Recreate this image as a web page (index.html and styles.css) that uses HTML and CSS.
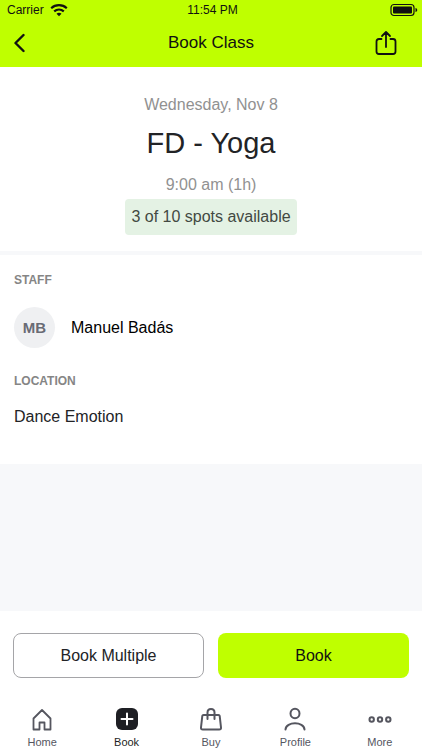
FILE: index.html
```html
<!DOCTYPE html>
<html lang="en">
<head>
<meta charset="utf-8">
<meta name="viewport" content="width=device-width, initial-scale=1">
<title>Book Class</title>
<link rel="stylesheet" href="styles.css">
</head>
<body>
<div class="app">
  <header class="top">
    <div class="status">
      <div class="carrier">
        <span>Carrier</span>
        <svg class="wifi" viewBox="0 0 18 14" aria-hidden="true">
          <path d="M1.200 5.200C5.600 1.200 12.400 1.200 16.800 5.200M4.200 8.300C7 5.900 11 5.900 13.800 8.300" fill="none" stroke="currentColor" stroke-width="2.200"/>
          <path d="M9 13.200 6.500 10.700C7.900 9.400 10.100 9.400 11.500 10.700Z" fill="currentColor"/>
        </svg>
      </div>
      <span>11:54 PM</span>
      <svg class="battery" viewBox="0 0 28 14" aria-hidden="true">
        <rect x="1" y="1.500" width="23" height="11" rx="3" fill="none" stroke="currentColor" stroke-width="1.200"/>
        <rect x="3" y="3.500" width="19" height="7" rx="1" fill="currentColor"/>
        <path d="M25.500 5C27.800 5.600 27.800 8.400 25.500 9Z" fill="currentColor"/>
      </svg>
    </div>
    <div class="bar">
      <button class="icon-button" type="button" aria-label="Back">
        <svg class="back" viewBox="0 0 12 20" aria-hidden="true"><path d="M9.500 2 1.500 10l8 8" fill="none" stroke="currentColor" stroke-width="2.400" stroke-linecap="round" stroke-linejoin="round"/></svg>
      </button>
      <h1 class="title">Book Class</h1>
      <button class="icon-button share-button" type="button" aria-label="Share">
        <svg class="share" viewBox="0 0 22 26" aria-hidden="true"><path d="M6.500 9H4Q1.500 9 1.500 11.500V21.500Q1.500 24 4 24H18Q20.500 24 20.500 21.500V11.500Q20.500 9 18 9H15.500M11 17V2.500M7 6 11 2l4 4" fill="none" stroke="currentColor" stroke-width="1.800" stroke-linecap="round" stroke-linejoin="round"/></svg>
      </button>
    </div>
  </header>
  <main class="content">
    <section class="summary">
      <p class="muted">Wednesday, Nov 8</p>
      <h2 class="class-name">FD - Yoga</h2>
      <p class="muted">9:00 am (1h)</p>
      <p class="spots">3 of 10 spots available</p>
    </section>
    <section class="details">
      <h3 class="label">Staff</h3>
      <div class="person">
        <span class="avatar">MB</span>
        <span>Manuel Badás</span>
      </div>
      <h3 class="label">Location</h3>
      <p class="place">Dance Emotion</p>
    </section>
  </main>
  <div class="actions">
    <button class="button outline" type="button">Book Multiple</button>
    <button class="button primary" type="button">Book</button>
  </div>
  <nav class="tabs">
    <a class="tab" href="#home">
      <svg viewBox="0 0 24 24" aria-hidden="true"><path d="M3.500 22.500V11.500L12 3l8.500 8.500V22.500H14.500V15.500H9.500V22.500Z" fill="none" stroke="currentColor" stroke-width="1.800" stroke-linejoin="round"/></svg>
      <span>Home</span>
    </a>
    <a class="tab active" href="#book" aria-current="page">
      <svg viewBox="0 0 24 24" aria-hidden="true"><rect x="1" y="1" width="22" height="22" rx="6" fill="currentColor"/><path d="M12 6.500V17.500M6.500 12H17.500" stroke="#fff" stroke-width="2" stroke-linecap="round"/></svg>
      <span>Book</span>
    </a>
    <a class="tab" href="#buy">
      <svg viewBox="0 0 24 24" aria-hidden="true"><path d="M4.500 8H19.500Q20.500 8 20.700 9L22 20.500Q22.200 22.500 20.200 22.500H3.800Q1.800 22.500 2 20.500L3.300 9Q3.500 8 4.500 8ZM8.500 12V5.500C8.500 .800 15.500 .800 15.500 5.500V12" fill="none" stroke="currentColor" stroke-width="2" stroke-linecap="round" stroke-linejoin="round"/></svg>
      <span>Buy</span>
    </a>
    <a class="tab" href="#profile">
      <svg viewBox="0 0 24 24" aria-hidden="true"><ellipse cx="12" cy="6.500" rx="4.500" ry="4.800" fill="none" stroke="currentColor" stroke-width="2"/><path d="M2.500 22.500C3 14.200 21 14.200 21.500 22.500" fill="none" stroke="currentColor" stroke-width="2" stroke-linecap="round"/></svg>
      <span>Profile</span>
    </a>
    <a class="tab" href="#more">
      <svg viewBox="0 0 24 24" aria-hidden="true"><g fill="none" stroke="currentColor" stroke-width="2"><circle cx="3.700" cy="12.500" r="2.200"/><circle cx="12" cy="12.500" r="2.200"/><circle cx="20.300" cy="12.500" r="2.200"/></g></svg>
      <span>More</span>
    </a>
  </nav>
</div>
</body>
</html>
```
FILE: styles.css
```css
* {
  box-sizing: border-box;
}

body,
h1,
h2,
h3,
p {
  margin: 0;
  font-weight: 400;
}

body {
  background: #fff;
  color: #222326;
  font: 16px/20px "Liberation Sans", Arial, sans-serif;
}

button {
  padding: 0;
  border: 0;
  background: none;
  color: inherit;
  font: inherit;
}

svg {
  display: block;
}

.app {
  display: flex;
  flex-direction: column;
  min-height: 100vh;
}

.top {
  background: #bfff00;
  color: #111;
  padding-bottom: 1px;
}

.status {
  display: grid;
  grid-template-columns: 1fr auto 1fr;
  align-items: center;
  padding: 0 4px 0 7px;
  font-size: 12px;
}

.carrier {
  display: flex;
  align-items: center;
  gap: 6px;
}

.wifi {
  width: 18px;
  height: 14px;
}

.battery {
  width: 28px;
  height: 14px;
  justify-self: end;
}

.bar {
  display: grid;
  grid-template-columns: 44px 1fr 44px;
  align-items: center;
  height: 46px;
  padding: 0 14px;
}

.icon-button {
  display: flex;
  align-items: center;
  height: 40px;
}

.share-button {
  justify-content: flex-end;
  padding-right: 11px;
}

.back {
  width: 12px;
  height: 20px;
}

.share {
  width: 22px;
  height: 26px;
}

.title {
  font-size: 17px;
  text-align: center;
}

.content {
  flex: 1;
  background: #f7f8fa;
}

.summary {
  display: flex;
  flex-direction: column;
  align-items: center;
  padding: 28px 14px 16px;
  margin-bottom: 4px;
  background: #fff;
}

.muted {
  color: #919191;
}

.class-name {
  margin: 8px 0 12px;
  font-size: 29px;
  line-height: 40px;
}

.spots {
  margin-top: 4px;
  padding: 8px 6px;
  border-radius: 4px;
  background: #e4f2e4;
  color: #424942;
}

.details {
  padding: 16px 14px 37px;
  background: #fff;
}

.label {
  color: #858585;
  font-size: 12px;
  font-weight: 700;
  line-height: 18px;
  text-transform: uppercase;
}

.person {
  display: flex;
  align-items: center;
  gap: 16px;
  margin: 18px 0 24px;
  color: #000;
}

.avatar {
  width: 41px;
  height: 41px;
  border-radius: 50%;
  background: #eff0f2;
  color: #696b75;
  font-size: 15px;
  font-weight: 700;
  line-height: 41px;
  text-align: center;
}

.place {
  margin-top: 17px;
}

.actions {
  display: grid;
  grid-template-columns: 1fr 1fr;
  gap: 14px;
  padding: 22px 13px;
}

.button {
  height: 45px;
  border-radius: 8px;
}

.outline {
  border: 1px solid #a5a5a8;
}

.primary {
  background: #bfff00;
  color: #111;
}

.tabs {
  display: grid;
  grid-template-columns: repeat(5, 1fr);
  padding: 7px 0 1px;
}

.tab {
  display: flex;
  flex-direction: column;
  align-items: center;
  gap: 4px;
  color: #55565f;
  font-size: 11px;
  line-height: 14px;
  text-decoration: none;
}

.tab svg {
  width: 24px;
  height: 24px;
}

.active {
  color: #1e1f24;
}
```
